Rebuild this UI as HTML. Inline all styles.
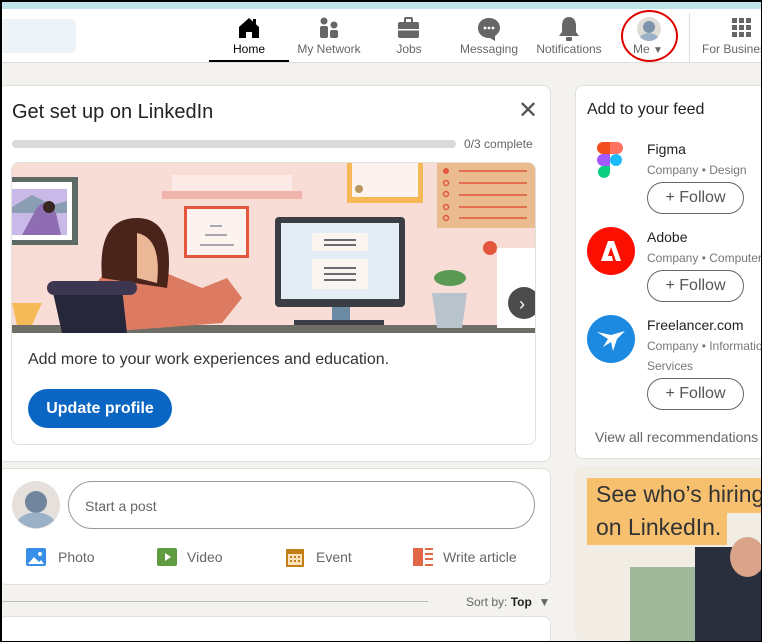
<!DOCTYPE html>
<html><head><style>
*{box-sizing:border-box;margin:0;padding:0}
html,body{width:762px;height:642px;overflow:hidden}
body{background:#f3f2ef;font-family:"Liberation Sans",sans-serif;position:relative;color:#191919}
.abs{position:absolute}
.card{position:absolute;background:#fff;border:1px solid #e0dfdc;border-radius:8px}
.nav{position:absolute;top:42px;font-size:12px;color:#666;text-align:center}
.follow{position:absolute;left:72px;width:97px;height:32px;border:1px solid #666;border-radius:16px;font-size:16px;color:#555;text-align:center;line-height:30px}
.sub{position:absolute;left:72px;font-size:12px;color:#777;white-space:nowrap}
.nm{position:absolute;left:72px;font-size:14px;color:#222}
.act{position:absolute;top:549px;font-size:14px;color:#666}
</style></head><body>
<div class="abs" style="left:0;top:0;width:762px;height:9px;background:#bfe3e9;border-top:2px solid #000"></div>
<div class="abs" style="left:0;top:9px;width:762px;height:54px;background:#fff;border-bottom:1px solid #ddd"></div>
<div class="abs" style="left:0;top:19px;width:76px;height:34px;background:#eef3f8;border-radius:4px"></div>
<svg class="abs" style="left:237px;top:16px" width="24" height="24" viewBox="0 0 24 24"><path d="M2 11 12 2l10 9v11h-7v-6h-6v6H2z" fill="#000"/><rect x="16" y="3" width="3" height="5" fill="#000"/></svg>
<div class="nav" style="left:228px;width:42px;color:#000">Home</div>
<div class="abs" style="left:209px;top:60px;width:80px;height:2px;background:#000"></div>
<svg class="abs" style="left:318px;top:17px" width="22" height="22" viewBox="0 0 22 22"><circle cx="6" cy="4" r="3.5" fill="#666"/><rect x="2" y="9" width="8" height="12" rx="2" fill="#666"/><circle cx="16" cy="8" r="3.5" fill="#666"/><rect x="12" y="13" width="8" height="8" rx="2" fill="#666"/></svg>
<div class="nav" style="left:295px;width:68px">My Network</div>
<svg class="abs" style="left:397px;top:17px" width="23" height="22" viewBox="0 0 23 22"><rect x="8" y="1" width="7" height="5" rx="1" fill="none" stroke="#666" stroke-width="2"/><rect x="1" y="5" width="21" height="16" rx="2" fill="#666"/><rect x="1" y="12" width="21" height="1.5" fill="#fff"/></svg>
<div class="nav" style="left:394px;width:30px">Jobs</div>
<svg class="abs" style="left:477px;top:17px" width="24" height="24" viewBox="0 0 24 24"><path d="M12 1C6 1 1 5 1 11s5 10 11 10h1l5 3v-5c3-2 5-5 5-8C23 5 18 1 12 1z" fill="#666"/><circle cx="8" cy="11" r="1.4" fill="#fff"/><circle cx="12" cy="11" r="1.4" fill="#fff"/><circle cx="16" cy="11" r="1.4" fill="#fff"/></svg>
<div class="nav" style="left:459px;width:60px">Messaging</div>
<svg class="abs" style="left:558px;top:16px" width="22" height="26" viewBox="0 0 22 26"><path d="M11 1c-5 0-7 4-7 9v6l-3 4h20l-3-4v-6c0-5-2-9-7-9z" fill="#666"/><rect x="8" y="21" width="6" height="4" rx="1" fill="#666"/></svg>
<div class="nav" style="left:534px;width:70px">Notifications</div>
<svg class="abs" style="left:637px;top:17px" width="24" height="24" viewBox="0 0 24 24"><circle cx="12" cy="12" r="12" fill="#e0dcd6"/><circle cx="12" cy="10" r="6" fill="#7d93ab"/><path d="M3 20c3-5 15-5 18 0a12 12 0 0 1-18 0z" fill="#9bb1c8"/></svg>
<div class="nav" style="left:631px;width:34px;color:#666">Me <span style="font-size:10px">▼</span></div>
<div class="abs" style="left:621px;top:10px;width:57px;height:52px;border:2.5px solid #e00000;border-radius:50%"></div>
<div class="abs" style="left:689px;top:13px;width:1px;height:50px;background:#ddd"></div>
<svg class="abs" style="left:732px;top:18px" width="20" height="20" viewBox="0 0 20 20"><g fill="#666"><rect x="0" y="0" width="5" height="5"/><rect x="7" y="0" width="5" height="5"/><rect x="14" y="0" width="5" height="5"/><rect x="0" y="7" width="5" height="5"/><rect x="7" y="7" width="5" height="5"/><rect x="14" y="7" width="5" height="5"/><rect x="0" y="14" width="5" height="5"/><rect x="7" y="14" width="5" height="5"/><rect x="14" y="14" width="5" height="5"/></g></svg>
<div class="nav" style="left:702px;white-space:nowrap">For Business</div>

<div class="card" style="left:-2px;top:85px;width:553px;height:377px"></div>
<div class="abs" style="left:12px;top:101px;font-size:20px;color:#222">Get set up on LinkedIn</div>
<div class="abs" style="left:518px;top:96px;font-size:24px;color:#555">✕</div>
<div class="abs" style="left:12px;top:140px;width:444px;height:8px;background:#d9d9d9;border-radius:4px"></div>
<div class="abs" style="left:464px;top:137px;font-size:12px;color:#666">0/3 complete</div>
<div class="abs" style="left:11px;top:162px;width:525px;height:283px;border:1px solid #e0dfdc;border-radius:8px;overflow:hidden">
<svg width="525" height="170" viewBox="0 0 525 170">
<rect width="525" height="170" fill="#f8ddd7"/>
<rect x="0" y="162" width="525" height="8" fill="#6e6e66"/>
<rect x="150" y="28" width="140" height="8" fill="#f0b4ac"/><rect x="160" y="12" width="120" height="16" fill="#fbeae6"/>
<rect x="0" y="14" width="66" height="68" fill="#5d6a66"/><rect x="0" y="19" width="60" height="58" fill="#fff"/><rect x="0" y="26" width="55" height="46" fill="#c9b9e8"/><path d="M0 44 20 32 40 42 55 38V50H0z" fill="#8a9db2"/><path d="M22 50q10-20 22 0l5 22H10z" fill="#8e6db3"/><circle cx="37" cy="44" r="6" fill="#3a2620"/>
<rect x="335" y="0" width="76" height="40" fill="#f5b957"/><rect x="340" y="0" width="66" height="34" fill="#fdf3ee"/><circle cx="347" cy="26" r="4" fill="#b8965e"/>
<rect x="425" y="0" width="100" height="65" fill="#e9bb8f"/><g fill="#e3573d"><circle cx="434" cy="8" r="3"/></g><g stroke="#e3573d" stroke-width="1.5" fill="none"><circle cx="434" cy="20" r="2.5"/><circle cx="434" cy="31" r="2.5"/><circle cx="434" cy="44" r="2.5"/><circle cx="434" cy="55" r="2.5"/></g><g stroke="#e3573d" stroke-width="1.5"><line x1="447" y1="8" x2="515" y2="8"/><line x1="447" y1="20" x2="515" y2="20"/><line x1="447" y1="32" x2="515" y2="32"/><line x1="447" y1="44" x2="515" y2="44"/><line x1="447" y1="55" x2="515" y2="55"/></g>
<path d="M80 170 85 120q10-20 45-20l60 25 25-10 15 20-20 25z" fill="#dc7a62"/>
<path d="M90 115q-5-60 35-60 40 0 30 70z" fill="#4a231b"/><path d="M125 70q25 5 20 50l-20-5z" fill="#eab896"/>
<rect x="172" y="43" width="65" height="52" fill="#e3573d"/><rect x="175" y="46" width="59" height="46" fill="#fdf3ee"/>
<g stroke="#8a8e9a" stroke-width="1.5"><line x1="198" y1="63" x2="210" y2="63"/><line x1="193" y1="72" x2="215" y2="72"/><line x1="188" y1="82" x2="222" y2="82"/></g>
<rect x="263" y="54" width="130" height="90" rx="4" fill="#3b3d45"/><rect x="269" y="60" width="118" height="76" fill="#e4ecf5"/><rect x="300" y="70" width="56" height="18" fill="#fbf5f2"/><rect x="300" y="96" width="56" height="30" fill="#fbf5f2"/>
<g stroke="#3b3d45" stroke-width="1.5"><line x1="312" y1="77" x2="344" y2="77"/><line x1="312" y1="82" x2="344" y2="82"/><line x1="312" y1="105" x2="344" y2="105"/><line x1="312" y1="111" x2="344" y2="111"/><line x1="312" y1="117" x2="344" y2="117"/></g>
<rect x="320" y="144" width="18" height="14" fill="#6d8aa5"/><rect x="282" y="157" width="90" height="5" fill="#3b3d45"/>
<path d="M40 125h70l5 45H50z" fill="#27273a"/><rect x="35" y="118" width="90" height="14" rx="7" fill="#3d3650"/>
<path d="M0 140h30l-10 22H5z" fill="#f5b957"/>
<path d="M420 130h35l-5 35h-25z" fill="#b8c3cc"/><ellipse cx="438" cy="115" rx="16" ry="8" fill="#5b9a55"/>
<path d="M485 85h40v80h-40z" fill="#fff"/><circle cx="478" cy="85" r="7" fill="#e3573d"/>
<circle cx="512" cy="140" r="16" fill="#4c4c4c"/><text x="507" y="147" fill="#fff" font-size="18" font-family="Liberation Sans">›</text>
</svg></div>
<div class="abs" style="left:28px;top:351px;font-size:16px;color:#333">Add more to your work experiences and education.</div>
<div class="abs" style="left:28px;top:389px;width:144px;height:39px;background:#0a66c2;border-radius:20px;color:#fff;font-size:16px;font-weight:bold;text-align:center;line-height:39px">Update profile</div>

<div class="card" style="left:-2px;top:468px;width:553px;height:117px"></div>
<svg class="abs" style="left:12px;top:481px" width="48" height="48" viewBox="0 0 48 48"><circle cx="24" cy="24" r="24" fill="#e5e0db"/><circle cx="24" cy="21" r="11" fill="#71869c"/><path d="M6 39c8-10 28-10 36 0a24 24 0 0 1-36 0z" fill="#9bb1c8"/></svg>
<div class="abs" style="left:68px;top:481px;width:467px;height:48px;border:1px solid #999;border-radius:24px;font-size:14px;color:#666;padding:16px 0 0 16px">Start a post</div>
<svg class="abs" style="left:26px;top:548px" width="20" height="18"><rect width="20" height="18" rx="2" fill="#378fe9"/><path d="M2 16l6-7 5 5 2-2 3 4z" fill="#fff"/><circle cx="14" cy="6" r="2" fill="#fff"/></svg>
<div class="act" style="left:58px">Photo</div>
<svg class="abs" style="left:157px;top:548px" width="20" height="18"><rect width="20" height="18" rx="2" fill="#5f9b41"/><path d="M8 5v8l6-4z" fill="#fff"/></svg>
<div class="act" style="left:187px">Video</div>
<svg class="abs" style="left:286px;top:547px" width="18" height="20"><rect y="2" width="18" height="18" rx="1" fill="#c37d16"/><rect x="2" y="7" width="14" height="11" fill="#fce2ba"/><g fill="#c37d16"><rect x="4" y="9" width="2" height="2"/><rect x="8" y="9" width="2" height="2"/><rect x="12" y="9" width="2" height="2"/><rect x="4" y="13" width="2" height="2"/><rect x="8" y="13" width="2" height="2"/><rect x="12" y="13" width="2" height="2"/></g></svg>
<div class="act" style="left:316px">Event</div>
<svg class="abs" style="left:413px;top:548px" width="20" height="18"><rect width="10" height="18" fill="#e06847"/><g fill="#e06847"><rect x="12" y="0" width="8" height="2"/><rect x="12" y="5" width="8" height="2"/><rect x="12" y="10" width="8" height="2"/><rect x="12" y="16" width="8" height="2"/></g></svg>
<div class="act" style="left:443px">Write article</div>
<div class="abs" style="left:0;top:601px;width:428px;height:1px;background:#bbb"></div>
<div class="abs" style="left:466px;top:595px;font-size:12px;color:#666;white-space:nowrap">Sort by: <b style="color:#222">Top</b> &nbsp;▼</div>
<div class="card" style="left:-2px;top:616px;width:553px;height:40px"></div>

<div class="card" style="left:575px;top:85px;width:200px;height:374px"></div>
<div class="abs" style="left:587px;top:101px;font-size:16px;color:#222">Add to your feed</div>
<div class="abs" style="left:575px;top:130px;width:187px;height:320px">
<svg class="abs" style="left:22px;top:11px" width="26" height="40" viewBox="0 0 26 40"><path d="M6 1h7v12H6a6 6 0 0 1 0-12z" fill="#f24e1e"/><path d="M13 1h7a6 6 0 0 1 0 12h-7z" fill="#ff7262"/><path d="M6 13h7v12H6a6 6 0 0 1 0-12z" fill="#a259ff"/><circle cx="19" cy="19" r="6" fill="#1abcfe"/><path d="M6 25h7v6a6 6 0 1 1-7-6z" fill="#0acf83"/></svg>
<div class="nm" style="top:11px">Figma</div><div class="sub" style="top:33px">Company • Design</div>
<div class="follow" style="top:52px">+ Follow</div>
<svg class="abs" style="left:12px;top:97px" width="48" height="48"><circle cx="24" cy="24" r="24" fill="#fa0f00"/><path d="M14 34 21 14h6l7 20h-5l-5-14-3 9h4l1 5z" fill="#fff"/></svg>
<div class="nm" style="top:99px">Adobe</div><div class="sub" style="top:121px">Company • Computer</div>
<div class="follow" style="top:140px">+ Follow</div>
<svg class="abs" style="left:12px;top:185px" width="48" height="48"><circle cx="24" cy="24" r="24" fill="#1c8ae0"/><path d="M10 17l14 3 14-4-8 8-4 12-2-9-8 5 5-8z" fill="#fff"/></svg>
<div class="nm" style="top:187px">Freelancer.com</div><div class="sub" style="top:209px">Company • Information</div><div class="sub" style="top:229px">Services</div>
<div class="follow" style="top:248px">+ Follow</div>
<div class="abs" style="left:20px;top:299px;font-size:14px;color:#666;white-space:nowrap">View all recommendations</div>
</div>

<div class="abs" style="left:575px;top:467px;width:190px;height:176px;border-radius:8px;overflow:hidden;background:#f2ede4">
<div class="abs" style="left:55px;top:100px;width:100px;height:76px;background:#9fb89a"></div>
<div class="abs" style="left:120px;top:80px;width:70px;height:96px;background:#2a2f3d"></div>
<div class="abs" style="left:155px;top:70px;width:35px;height:40px;background:#d9a48a;border-radius:50%"></div>
<div class="abs" style="left:12px;top:11px;width:180px;height:35px;background:#f6c06e;font-size:23px;color:#333;padding:3px 0 0 9px;white-space:nowrap">See who’s hiring</div>
<div class="abs" style="left:12px;top:46px;width:140px;height:32px;background:#f6c06e;font-size:23px;color:#333;padding:1px 0 0 9px">on LinkedIn.</div>
</div>
<div class="abs" style="left:0;top:0;width:762px;height:642px;border:1px solid #000;border-left-width:2px;pointer-events:none"></div>
</body></html>
